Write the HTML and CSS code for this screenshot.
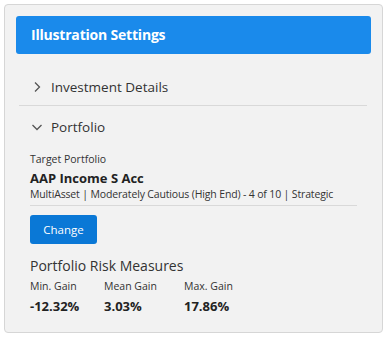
FILE: index.html
```html
<html>
	<head>
		<title>Illustration Settings</title>
		<link rel="stylesheet" href="styles.css">
	</head>
	<body>
		<div class="card">
			<div class="card-head">Illustration Settings</div>

			<div class="section">
				<div class="section-head">
					<svg class="chev" width="12" height="12" viewBox="0 0 12 12"><path d="M4 1.5 L8.5 6 L4 10.5" fill="none" stroke="#555" stroke-width="1.3"/></svg>
					<span>Investment Details</span>
				</div>
			</div>

			<div class="section open">
				<div class="section-head">
					<svg class="chev" width="12" height="12" viewBox="0 0 12 12"><path d="M1.5 4 L6 8.5 L10.5 4" fill="none" stroke="#555" stroke-width="1.3"/></svg>
					<span>Portfolio</span>
				</div>

				<div class="section-body">
					<div class="target">
						<div class="small-label">Target Portfolio</div>
						<div class="fund-name">AAP Income S Acc</div>
						<div class="fund-meta">MultiAsset | Moderately Cautious (High End) - 4 of 10 | Strategic</div>
					</div>

					<button class="btn">Change</button>

					<div class="risk-title">Portfolio Risk Measures</div>
					<div class="risk-row">
						<div class="risk-col">
							<div class="small-label">Min. Gain</div>
							<div class="risk-val">-12.32%</div>
						</div>
						<div class="risk-col">
							<div class="small-label">Mean Gain</div>
							<div class="risk-val">3.03%</div>
						</div>
						<div class="risk-col">
							<div class="small-label">Max. Gain</div>
							<div class="risk-val">17.86%</div>
						</div>
					</div>
				</div>
			</div>
		</div>
	</body>
</html>
```

FILE: styles.css
```css
body {
	margin: 0;
	padding: 4px;
	background-color: #fff;
	font-family: "Open Sans", "Noto Sans", sans-serif;
	color: #222;
}

.card {
	width: 379px;
	height: 329px;
	box-sizing: border-box;
	background-color: #f2f2f2;
	border: 1px solid #d6d6d6;
	border-radius: 4px;
	padding: 11px 11px 0 11px;
}

.card-head {
	height: 38px;
	background-color: #1a8aeb;
	border-radius: 3px;
	color: #fff;
	font-weight: 700;
	font-size: 14px;
	line-height: 38px;
	padding-left: 15px;
	letter-spacing: -0.2px;
}

.section {
	margin: 0 4px 0 3px;
}

.section-head {
	display: flex;
	align-items: center;
	height: 18px;
	padding: 24px 0 9px 12px;
	font-size: 13.5px;
	color: #333;
	border-bottom: 1px solid #d9d9d9;
}

.section.open .section-head {
	border-bottom: none;
	padding-top: 12px;
	padding-bottom: 16px;
}

.chev {
	margin-right: 8px;
}

.section-body {
	padding-left: 11px;
	padding-right: 10px;
}

.small-label {
	font-size: 10.5px;
	line-height: 14px;
	color: #333;
}

.target {
	border-bottom: 1px solid #d9d9d9;
	padding-bottom: 4px;
}

.fund-name {
	font-weight: 700;
	font-size: 13px;
	line-height: 18px;
	margin-top: 3px;
}

.fund-meta {
	font-size: 10.5px;
	line-height: 14px;
	letter-spacing: -0.15px;
	color: #333;
}

.btn {
	margin-top: 9px;
	width: 67px;
	height: 29px;
	border: none;
	border-radius: 3px;
	background-color: #0a78d6;
	color: #fff;
	font-family: "Open Sans", sans-serif;
	font-size: 11.5px;
}

.risk-title {
	margin-top: 12px;
	font-size: 14px;
	line-height: 20px;
	color: #333;
}

.risk-row {
	display: flex;
	margin-top: 3px;
}

.risk-col:nth-child(1) { width: 74px; }
.risk-col:nth-child(2) { width: 80px; }

.risk-val {
	font-weight: 700;
	font-size: 13px;
	line-height: 18px;
	margin-top: 4px;
}
```
